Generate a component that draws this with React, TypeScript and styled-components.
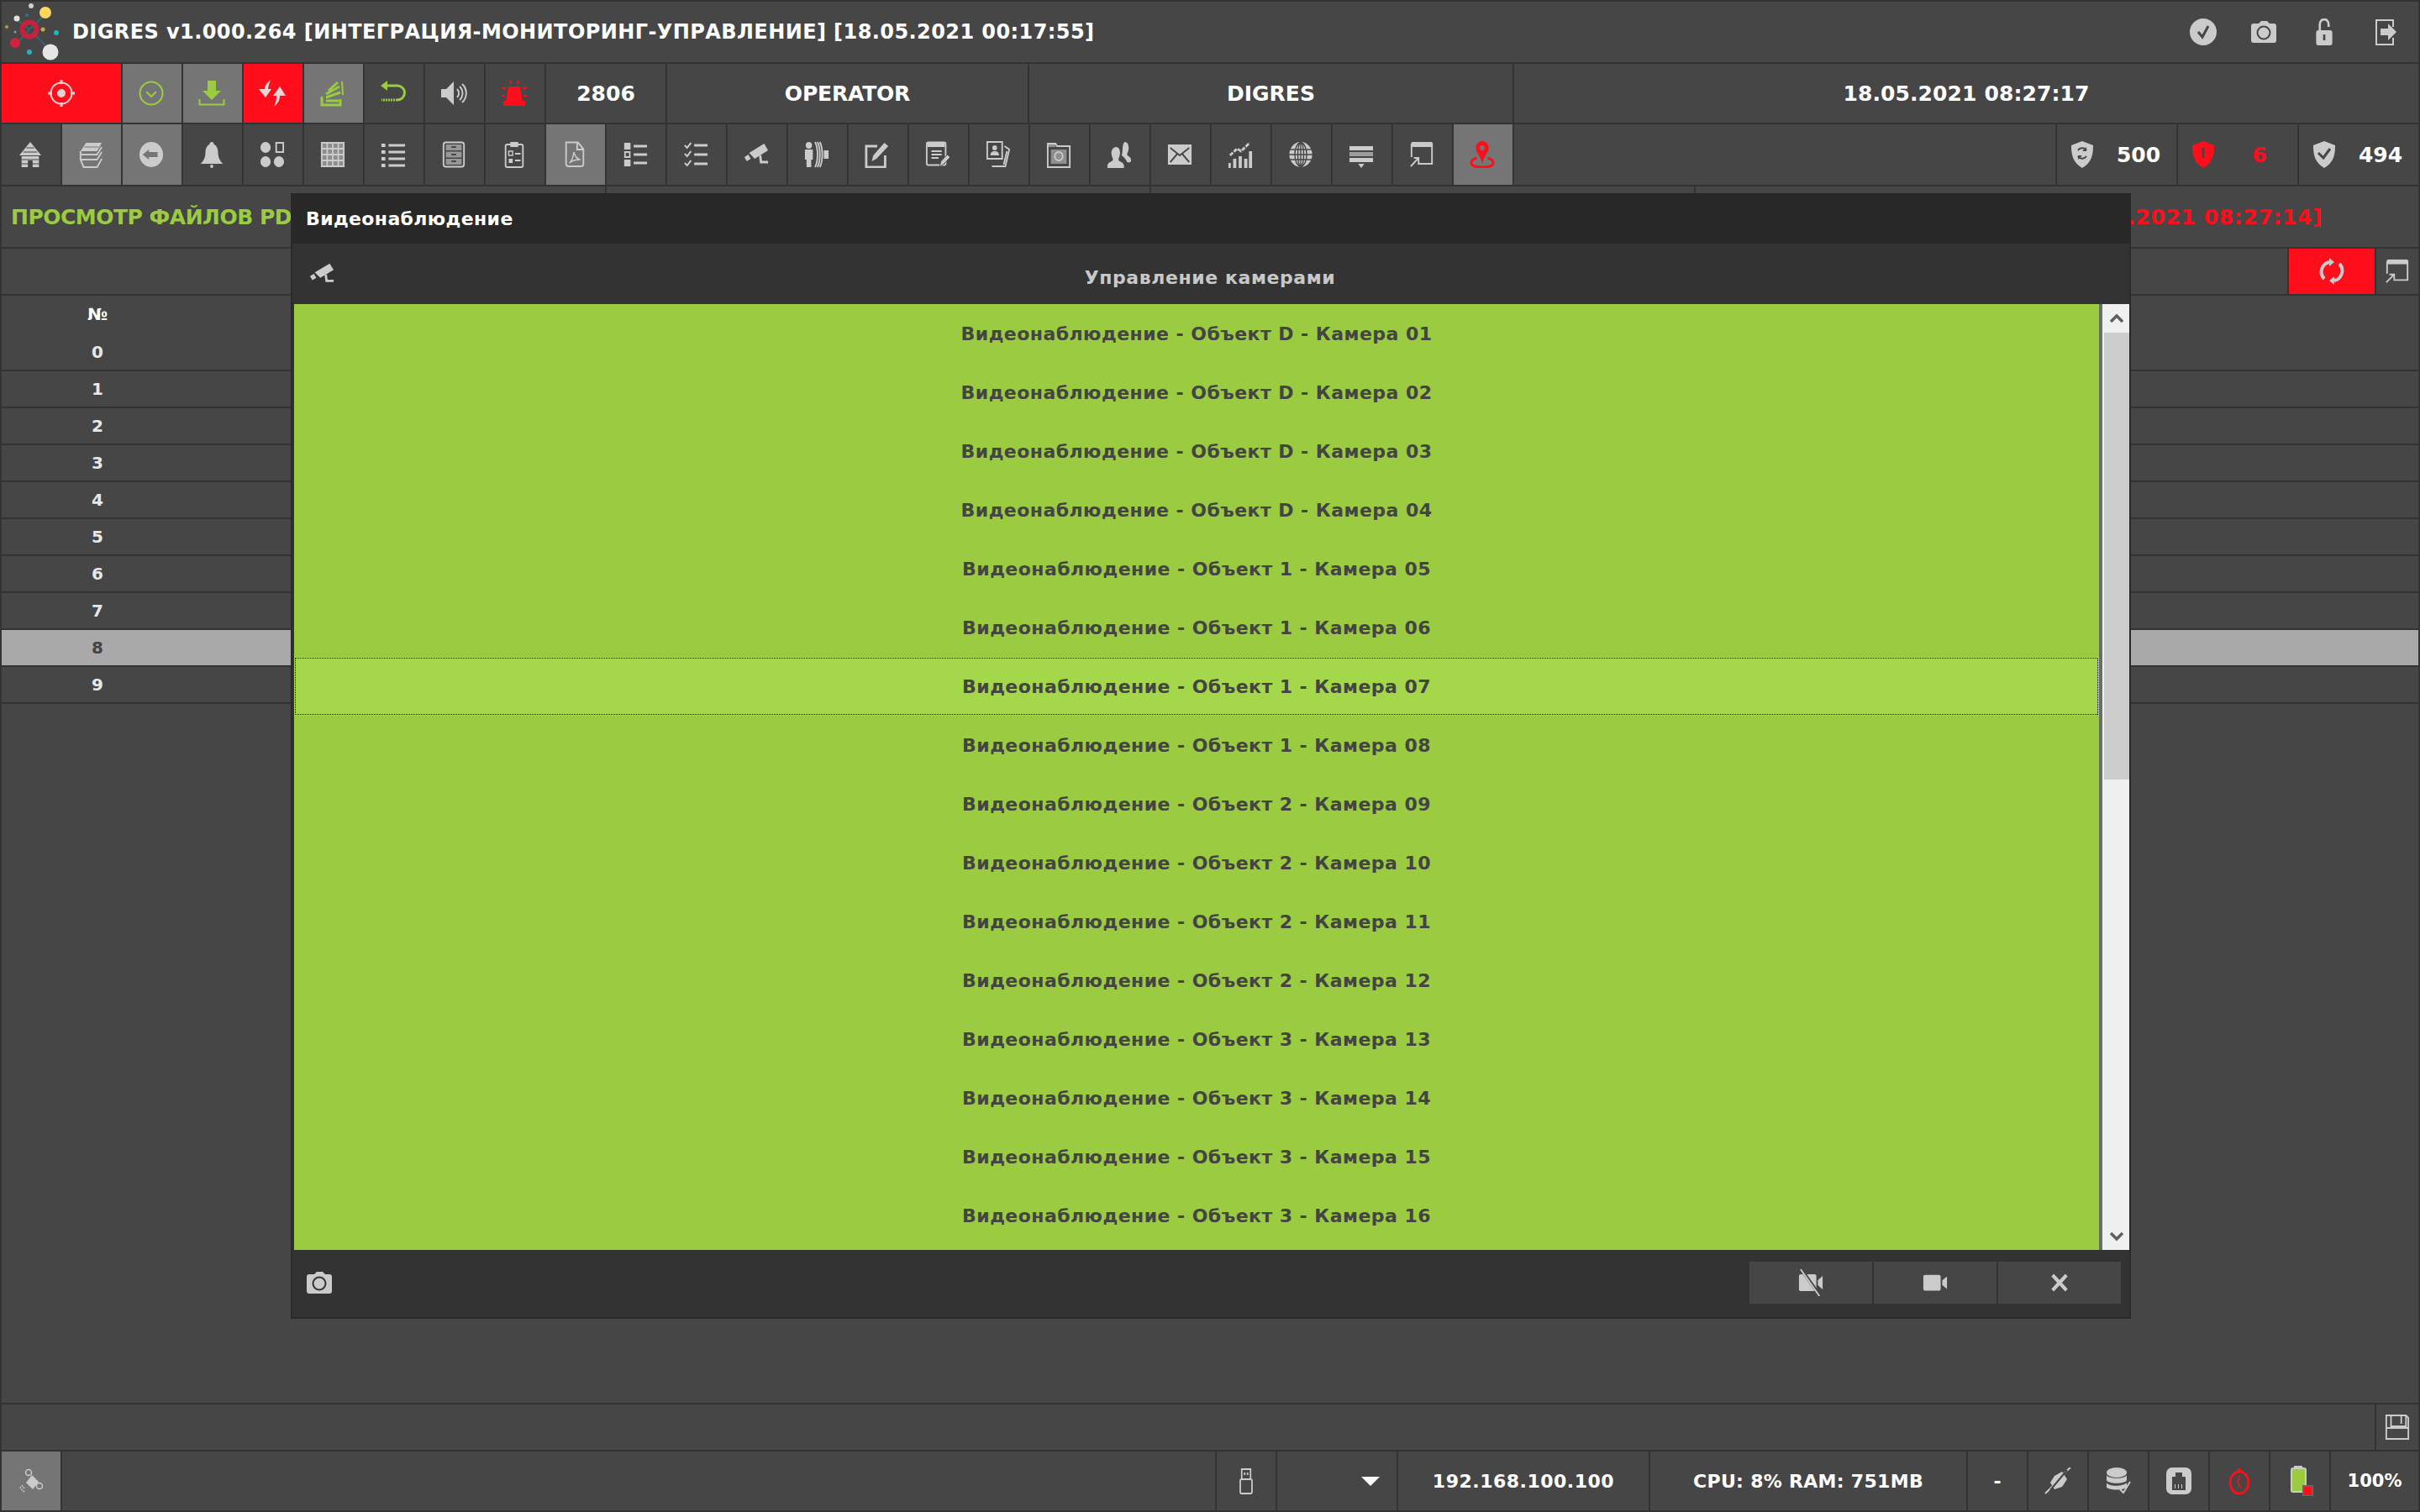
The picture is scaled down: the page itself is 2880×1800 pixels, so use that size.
import { ReactNode } from 'react';
import styled, { createGlobalStyle } from 'styled-components';

const PANEL = '#464646';
const LINE = '#333333';
const ACTIVE = '#757575';
const ICON = '#cbcbcb';
const GREEN = '#9acb40';
const RED = '#ff0d1b';

const GlobalStyle = createGlobalStyle`
  html, body {
    margin: 0;
    padding: 0;
    background: ${LINE};
  }
  * {
    box-sizing: border-box;
  }
`;

const Page = styled.div`
  position: relative;
  width: 2880px;
  height: 1800px;
  padding: 2px;
  background: ${LINE};
  display: flex;
  flex-direction: column;
  gap: 2px;
  overflow: hidden;
  font-family: 'DejaVu Sans', Verdana, sans-serif;
  font-weight: 700;
  color: #fff;
`;

const Row = styled.div<{ $h: number }>`
  height: ${(p) => p.$h}px;
  flex: none;
  display: flex;
  gap: 2px;
`;

const Cell = styled.div<{ $w?: number; $bg?: string; $color?: string; $size?: number; $track?: number }>`
  width: ${(p) => (p.$w ? `${p.$w}px` : 'auto')};
  flex: ${(p) => (p.$w ? 'none' : '1 1 0')};
  min-width: 0;
  background: ${(p) => p.$bg ?? PANEL};
  color: ${(p) => p.$color ?? '#fff'};
  font-size: ${(p) => p.$size ?? 25}px;
  letter-spacing: ${(p) => p.$track ?? 0}px;
  display: flex;
  align-items: center;
  justify-content: center;
  white-space: nowrap;
`;

const ToolCell = styled(Cell)`
  padding-right: 2px;
`;

const TitleBar = styled.div`
  flex: 1;
  background: ${PANEL};
  display: flex;
  align-items: center;
`;

const TitleText = styled.div`
  flex: 1;
  margin-left: 8px;
  font-size: 24px;
  letter-spacing: 0.42px;
`;

const TitleAction = styled.div<{ $w?: number }>`
  width: ${(p) => p.$w ?? 72}px;
  display: flex;
  justify-content: center;
`;

const Filler = styled.div`
  flex: 1;
  background: ${PANEL};
`;

const HeadCell = styled.div<{ $w?: number; $end?: boolean; $color: string; $track?: number }>`
  width: ${(p) => (p.$w ? `${p.$w}px` : 'auto')};
  flex: ${(p) => (p.$w ? 'none' : '1 1 0')};
  background: ${PANEL};
  color: ${(p) => p.$color};
  font-size: 25px;
  letter-spacing: ${(p) => p.$track ?? 0}px;
  display: flex;
  align-items: center;
  white-space: nowrap;
  overflow: hidden;
  justify-content: ${(p) => (p.$end ? 'flex-end' : 'flex-start')};
  padding: ${(p) => (p.$end ? '0 114px 0 0' : '0 0 0 11px')};
`;

const Counter = styled.div`
  width: 142px;
  flex: none;
  background: ${PANEL};
  padding-left: 16px;
  display: flex;
  align-items: center;
`;

const CounterValue = styled.span<{ $color?: string }>`
  flex: 1;
  padding-left: 8px;
  text-align: center;
  font-size: 25px;
  color: ${(p) => p.$color ?? '#fff'};
`;

const Table = styled.div`
  flex: 1;
  display: flex;
  flex-direction: column;
  gap: 2px;
`;

const TableRow = styled.div<{ $selected?: boolean }>`
  height: 42px;
  flex: none;
  background: ${(p) => (p.$selected ? '#a9a9a9' : PANEL)};
  color: ${(p) => (p.$selected ? '#444' : '#e8e8e8')};
  font-size: 20px;
  display: flex;
  align-items: center;
`;

/* the header row runs into row 0 with no rule between them */
const TableHead = styled(TableRow)`
  height: 46px;
  margin-bottom: -2px;
  padding-bottom: 2px;
  color: #fff;
`;

const NumberCol = styled.div`
  width: 228px;
  text-align: center;
`;

const Modal = styled.div`
  position: absolute;
  left: 346px;
  top: 230px;
  width: 2190px;
  height: 1340px;
  background: #333;
  border: 2px solid #2a2a2a;
  border-top: 0;
  display: flex;
  flex-direction: column;
`;

const ModalTitle = styled.div`
  height: 60px;
  flex: none;
  margin: 0 -2px;
  padding-left: 18px;
  background: #282828;
  font-size: 22px;
  letter-spacing: 0.37px;
  display: flex;
  align-items: center;
`;

const ModalHead = styled.div`
  position: relative;
  height: 72px;
  flex: none;
  padding: 8px 2px 0 0;
  color: #c8c8c8;
  font-size: 22px;
  letter-spacing: 0.58px;
  display: flex;
  align-items: center;
  justify-content: center;
`;

const HeadIcon = styled.div`
  position: absolute;
  left: 20px;
  top: 21px;
  display: flex;
`;

const ModalBody = styled.div`
  flex: 1;
  min-height: 0;
  padding-left: 2px;
  display: flex;
`;

const CameraList = styled.div`
  flex: 1;
  background: ${GREEN};
  display: flex;
  flex-direction: column;
`;

const CameraRow = styled.div<{ $focused?: boolean }>`
  position: relative;
  height: 70px;
  flex: none;
  color: #444;
  font-size: 22px;
  letter-spacing: 0.45px;
  display: flex;
  align-items: center;
  justify-content: center;
  ${(p) =>
    p.$focused &&
    `
    background: #a4d74a;
    &::after {
      content: '';
      position: absolute;
      inset: 1px;
      background-image:
        repeating-linear-gradient(90deg, #000 0 1px, transparent 1px 2px),
        repeating-linear-gradient(90deg, #000 0 1px, transparent 1px 2px),
        repeating-linear-gradient(0deg, #000 0 1px, transparent 1px 2px),
        repeating-linear-gradient(0deg, #000 0 1px, transparent 1px 2px);
      background-size: 100% 1px, 100% 1px, 1px 100%, 1px 100%;
      background-position: top, bottom, left, right;
      background-repeat: no-repeat;
    }
  `}
`;

const Gutter = styled.div`
  width: 4px;
  background: #667060;
`;

const Scrollbar = styled.div`
  width: 32px;
  padding-left: 2px;
  background: #f0f0f0;
  display: flex;
  flex-direction: column;
`;

const ScrollButton = styled.div`
  height: 34px;
  flex: none;
  display: flex;
  align-items: center;
  justify-content: center;
`;

const ScrollThumb = styled.div`
  height: 532px;
  flex: none;
  background: #cdcdcd;
`;

const ScrollTrack = styled.div`
  flex: 1;
`;

const ModalFooter = styled.div`
  height: 80px;
  flex: none;
  padding: 14px 10px 16px 16px;
  display: flex;
  align-items: center;
  gap: 2px;
`;

const FooterSpacer = styled.div`
  flex: 1;
  display: flex;
`;

const FooterButton = styled.div`
  width: 146px;
  height: 50px;
  background: #464646;
  display: flex;
  align-items: center;
  justify-content: center;
`;

const DropCell = styled(Cell)`
  justify-content: flex-end;
  padding-right: 20px;
`;

const DropArrow = styled.div`
  width: 0;
  height: 0;
  border-left: 11px solid transparent;
  border-right: 11px solid transparent;
  border-top: 11px solid #fff;
`;

const Glyph = styled.svg<{ $color?: string }>`
  display: block;
  flex: none;
  color: ${(p) => p.$color ?? ICON};
  fill: currentColor;
`;

const line = { fill: 'none', stroke: 'currentColor', strokeWidth: 2 };
const thick = { fill: 'none', stroke: 'currentColor', strokeWidth: 3 };

const glyphs: Record<string, (bg: string) => ReactNode> = {
  target: () => (
    <>
      <circle cx="16" cy="16" r="12.5" {...line} />
      <circle cx="16" cy="16" r="5" />
      <path d="M14.5 0h3v5h-3zM14.5 27h3v5h-3zM0 14.5h5v3H0zM27 14.5h5v3h-5z" />
    </>
  ),
  circleDown: () => (
    <>
      <circle cx="16" cy="16" r="13.5" {...line} />
      <path d="M10 14l6 6 6-6" {...line} />
    </>
  ),
  download: () => (
    <>
      <path d="M11 1h10v12h6L16 24 5 13h6z" />
      <path d="M1.500 23v6.500h29V23" {...line} />
    </>
  ),
  swap: () => (
    <>
      <path d="M14 0c-3 3-7 6-7 11H0l8 10 7-10H11c0-4 2-7 3-11z" />
      <path d="M18 32c3-3 7-6 7-13h7l-7-11-8 11h4c0 5-1 9-3 13z" />
    </>
  ),
  stack: () => (
    <>
      <path d="M3 20v10h22v-7" {...thick} />
      <path d="M8 25h15M8 21l17-6M8 17L24 8M11 13L22 3" {...thick} />
      <path d="M27 2l1 16" {...line} />
    </>
  ),
  undo: () => (
    <>
      <path d="M8 7h13a8.500 8.500 0 0 1 0 17" {...thick} />
      <path d="M9 1L1 7l8 6z" />
      <path d="M21 24H2" {...thick} strokeDasharray="2 1" />
    </>
  ),
  sound: () => (
    <>
      <path d="M1 11h6l9-9v28l-9-9H1z" />
      <path d="M20 11a7 7 0 0 1 0 10M23 8a11 11 0 0 1 0 16M26 5a15 15 0 0 1 0 22" {...line} />
    </>
  ),
  siren: () => (
    <>
      <path d="M9 8h14l3 17H6z" />
      <path d="M3 25h26v6H3z" />
      <path d="M11 1l1 4M21 1l-1 4M1 9l5 2M31 9l-5 2M1 19h4M27 19h4" {...line} />
    </>
  ),
  home: (bg) => (
    <>
      <path d="M16 1l14 16H2z" />
      <path d="M5 18h22v13H5z" />
      <path d="M11 8h10M7 13h18M5 22h22M5 27h22" stroke={bg} strokeWidth="1.200" fill="none" />
      <path d="M13 23h6v8h-6z" fill={bg} />
    </>
  ),
  layers: (bg) => (
    <>
      <path d="M10 2h20l-6 10H3z" />
      <path d="M3 12v4h21l6-9" {...line} />
      <path d="M3 17v5h21l6-9" {...line} />
      <path d="M3 22l4 9h17l6-10" {...line} />
      <path d="M8 7h18" stroke={bg} strokeWidth="1" fill="none" />
    </>
  ),
  back: (bg) => (
    <>
      <circle cx="16" cy="16" r="15" />
      <path d="M5 16l8-6v3h11v6H13v3z" fill={bg} />
    </>
  ),
  bell: () => (
    <>
      <path d="M16 1c2 0 3 2 3 3 4 2 5 6 5 10 0 5 2 9 6 13H2c4-4 6-8 6-13 0-4 1-8 5-10 0-1 1-3 3-3z" />
      <circle cx="16" cy="30" r="2" />
    </>
  ),
  shapes: () => (
    <>
      <circle cx="7.500" cy="7.500" r="6.500" />
      <path d="M21 2h9v11h-9z" {...line} />
      <circle cx="7.500" cy="24.500" r="6.500" />
      <circle cx="24.500" cy="24.500" r="6.500" />
    </>
  ),
  grid: () => (
    <>
      <path d="M2 2h28v28H2z" opacity=".55" />
      <path d="M2 1v30M9 1v30M16 1v30M23 1v30M30 1v30M1 2h30M1 9h30M1 16h30M1 23h30M1 30h30" {...line} />
    </>
  ),
  list: () => (
    <>
      <path d="M1 3h5v4H1zM1 11h5v4H1zM1 19h5v4H1zM1 27h5v4H1z" />
      <path d="M10 5h21M10 13h21M10 21h21M10 29h21" {...thick} />
    </>
  ),
  cabinet: (bg) => (
    <>
      <rect x="3" y="1.500" width="26" height="29" rx="3" {...line} />
      <path d="M6 4h20v7H6zM6 12.500h20v7H6zM6 21h20v7H6z" opacity=".6" />
      <path d="M13 7h6M13 16h6M13 24h6" {...line} stroke={bg} />
    </>
  ),
  clipboard: () => (
    <>
      <rect x="5" y="4" width="22" height="27" rx="2" {...line} />
      <path d="M11 1h10v6H11z" />
      <path d="M9 12h5v5H9z" {...line} strokeWidth="1.500" />
      <path d="M9 21h5v5H9zM17 14h7v2h-7zM17 22h7v2h-7z" />
    </>
  ),
  pdf: () => (
    <>
      <path d="M5 1.500h15l7 8V27a3 3 0 0 1-3 3H8a3 3 0 0 1-3-3z" {...line} />
      <path d="M19 2v8h8" {...line} />
      <path d="M9 26c3-2 5-7 6-13 1 5 3 8 8 9-5 0-10 1-14 4z" {...line} strokeWidth="1.500" />
    </>
  ),
  squares: () => (
    <>
      <path d="M2 2h8v8H2zM2 22h8v8H2z" />
      <path d="M3 13h6v6H3z" {...line} />
      <path d="M14 6h17M14 16h17M14 26h17" {...thick} />
    </>
  ),
  checks: () => (
    <>
      <path d="M2 5l3 3 5-6M2 15l3 3 5-6M2 26l3 3 5-6" {...line} />
      <path d="M14 5h17M14 16h17M14 27h17" {...thick} />
    </>
  ),
  cctv: () => (
    <>
      <path d="M7 14L26 3l5 8-17 10z" />
      <path d="M1 19l5-3 3 5-5 3z" />
      <path d="M21 17l1 8h9" {...thick} />
    </>
  ),
  broadcast: () => (
    <>
      <circle cx="6" cy="5" r="4" />
      <path d="M1 10h10v12H9v9H3v-9H1z" />
      <path d="M14 1c4 8 4 22 0 30M17 1c4 8 4 22 0 30M20 1c4 8 4 22 0 30" {...line} />
      <path d="M25 11h6v10h-6z" />
    </>
  ),
  edit: () => (
    <>
      <path d="M16 6H2v25h24V17" {...thick} />
      <path d="M9 24l2-7L25 2l5 4-15 15z" />
    </>
  ),
  note: (bg) => (
    <>
      <rect x="2" y="1.500" width="24" height="27" rx="2" {...line} />
      <path d="M3 2h22v5H3z" />
      <path d="M8 12h13M8 16h13M8 20h9" {...line} />
      <path d="M18 31l2-7 8-8 4 3-8 8z" stroke={bg} />
    </>
  ),
  photos: () => (
    <>
      <path d="M2 1h19v20H2z" {...line} />
      <circle cx="11.500" cy="8" r="3" />
      <path d="M6 17c0-4 3-5 5.500-5s5.500 1 5.500 5z" />
      <path d="M24 6l6 4-5 20H8M27 12l-4 16" {...line} />
    </>
  ),
  folderCam: () => (
    <>
      <path d="M2 5V3h10l2 3h16v25H2z" {...line} />
      <path d="M2 3h10v4H2zM6 10h20v17H6z" opacity=".55" />
      <circle cx="16" cy="18" r="5" {...line} />
    </>
  ),
  users: () => (
    <>
      <path d="M23 1c4 0 5 4 5 7 0 4-2 6-2 8s5 2 5 7c0 2-2 3-5 2-2-4-4-6-7-8 2-3 0-14 4-16z" />
      <path d="M12 7c4 0 5 4 5 7 0 4-2 6-2 8 0 3 7 2 7 8v2H1v-2c0-6 7-5 7-8 0-2-2-4-2-8 0-3 2-7 6-7z" />
    </>
  ),
  mail: (bg) => (
    <>
      <path d="M1 4h30v24H1z" />
      <path d="M4 8l12 9 12-9M4 25l9-10M28 25l-9-10" {...line} stroke={bg} />
    </>
  ),
  chart: () => (
    <>
      <path d="M1 26h3v6H1zM7 21h4v11H7zM14 18h4v14h-4zM21 21h4v11h-4zM27 12h4v20h-4z" />
      <path d="M3 17l9-8 5 3L28 2" {...thick} strokeDasharray="5 1.500" />
    </>
  ),
  globe: () => (
    <>
      <ellipse cx="16" cy="16" rx="14.500" ry="15" />
      <path
        d="M1 10h30M1 16h30M1 22h30M16 1v30M16 1c-5 5-5 25 0 30M16 1c5 5 5 25 0 30M16 1c-10 5-10 25 0 30M16 1c10 5 10 25 0 30"
        fill="none"
        stroke="#464646"
        strokeWidth="1.500"
      />
    </>
  ),
  bars: () => (
    <>
      <path d="M1 6h30v5H1z" />
      <path d="M1 13h30v5H1z" opacity=".65" />
      <path d="M1 20h30v5H1z" />
      <path d="M12 27h8l-4 5z" />
    </>
  ),
  cast: () => (
    <>
      <path d="M3 3h26v24H11" {...line} />
      <path d="M3 1h26v6H3z" />
      <path d="M3 3v16" {...line} />
      <path d="M2 30l9-9M6 20h6v6" {...line} />
    </>
  ),
  pin: () => (
    <>
      <path
        fillRule="evenodd"
        d="M16 0c5 0 8 4 8 8 0 6-6 9-8 19-2-10-8-13-8-19 0-4 3-8 8-8zm0 5a3 3 0 1 0 0 6 3 3 0 0 0 0-6z"
      />
      <path d="M9 20c-5 1-7 4-7 6 0 3 5 5 14 5s14-2 14-5c0-2-2-5-7-6" {...thick} />
    </>
  ),
  shieldSync: (bg) => (
    <>
      <path d="M14 0l13 5c0 10-1 20-13 27C2 25 1 15 1 5z" />
      <path d="M9 11a6 6 0 0 1 10 0M19 18a6 6 0 0 1-10 0" {...line} stroke={bg} />
      <path d="M19 7v5h-5M9 22v-5h5" fill={bg} />
    </>
  ),
  shieldAlert: (bg) => (
    <>
      <path d="M14 0l13 5c0 10-1 20-13 27C2 25 1 15 1 5z" />
      <path d="M12.500 8h3v12h-3z" fill={bg} />
    </>
  ),
  shieldCheck: (bg) => (
    <>
      <path d="M14 0l13 5c0 10-1 20-13 27C2 25 1 15 1 5z" />
      <path d="M7 14l6 6 8-11" {...thick} stroke={bg} />
    </>
  ),
  checkCircle: (bg) => (
    <>
      <circle cx="16" cy="16" r="16" />
      <path d="M10 16l5 6 7-13" {...thick} stroke={bg} />
    </>
  ),
  camera: (bg) => (
    <>
      <path d="M1 9a3 3 0 0 1 3-3h6l3-3h7l3 3h5a3 3 0 0 1 3 3v17a3 3 0 0 1-3 3H4a3 3 0 0 1-3-3z" />
      <circle cx="16" cy="17" r="7.500" {...line} stroke={bg} />
    </>
  ),
  unlock: (bg) => (
    <>
      <path d="M10 16V7a6 6 0 0 1 12 0v3" {...thick} />
      <rect x="5" y="14" width="22" height="18" rx="3" />
      <path d="M14.500 19h3v7h-3z" fill={bg} />
    </>
  ),
  exit: () => (
    <>
      <path d="M24 10V2H4v29h20v-8" {...line} />
      <path d="M9 12h9V6l10 10-10 10v-6H9z" />
    </>
  ),
  refresh: () => (
    <>
      <path d="M7 25A12 12 0 0 1 13 5M25 7a12 12 0 0 1-6 20" {...thick} strokeWidth="4" />
      <path d="M13 0l6 5-6 5zM19 22l-6 5 6 5z" />
    </>
  ),
  save: () => (
    <>
      <path d="M2 2h25l3 3v25H2z" {...line} />
      <path d="M2 17h28M21 2v10M8 2v13h19V2" {...line} />
    </>
  ),
  satellite: () => (
    <>
      <path d="M17 9l8 8-7 9-8-8z" />
      <circle cx="13" cy="6" r="3.500" {...line} strokeWidth="1.500" />
      <circle cx="26" cy="22" r="3.500" {...line} strokeWidth="1.500" />
      <path d="M3 23c1 3 3 5 6 6M5 21c1 2 2 3 4 4" {...line} strokeWidth="1.500" strokeDasharray="2 1" />
    </>
  ),
  usb: () => (
    <>
      <rect x="8" y="14" width="16" height="17" rx="2" {...line} />
      <path d="M10 2h12v12H10z" {...line} />
      <path d="M13 6h2v3h-2zM17 6h2v3h-2z" />
    </>
  ),
  plugOff: (bg) => (
    <>
      <path d="M12 10l9-5 6 9-6 9-9 3-5-8z" />
      <path d="M1 31l9-9M22 8l9-8" {...line} />
      <path d="M7 27L27 3" {...line} stroke={bg} />
    </>
  ),
  dbCheck: () => (
    <>
      <ellipse cx="14" cy="6" rx="12" ry="6" />
      <path d="M2 9c2 5 22 5 24 0v6c-2 5-22 5-24 0z" />
      <path d="M2 18c2 5 20 5 24 0v5c-2 4-16 5-24 1z" />
      <path d="M18 26l4 4 8-13" {...line} />
    </>
  ),
  ethernet: (bg) => (
    <>
      <rect x="1" y="0" width="30" height="32" rx="7" />
      <path d="M12 6h8v5h4v16H8V11h4z" fill={bg} />
      <path d="M11 20h1v5h-1zM15 20h1v5h-1zM19 20h1v5h-1z" />
    </>
  ),
  timer: () => (
    <>
      <ellipse cx="16" cy="18" rx="12.500" ry="13" {...thick} />
      <path d="M14 1h4v5h-4z" />
      <path d="M16 10l-2 8 4 6" {...line} />
    </>
  ),
  videoOff: (bg) => (
    <>
      <path d="M1 8a2 2 0 0 1 2-2h18a2 2 0 0 1 2 2v16a2 2 0 0 1-2 2H3a2 2 0 0 1-2-2zM25 13l6-5v16l-6-5z" />
      <path d="M4 0l24 32" {...line} stroke={bg} strokeWidth="4" />
      <path d="M3 0l24 32" {...line} />
    </>
  ),
  video: () => <path d="M1 8a2 2 0 0 1 2-2h18a2 2 0 0 1 2 2v16a2 2 0 0 1-2 2H3a2 2 0 0 1-2-2zM25 13l6-5v16l-6-5z" />,
  close: () => <path d="M4 4l24 24M28 4L4 28" {...line} strokeWidth="6" />,
  chevronUp: () => <path d="M1 10l7-7 7 7" {...line} stroke="#606060" strokeWidth="3.500" />,
  chevronDown: () => <path d="M1 3l7 7 7-7" {...line} stroke="#606060" strokeWidth="3.500" />,
};

function Icon({
  name,
  color,
  bg = PANEL,
  w = 32,
  h = 32,
  box = '0 0 32 32',
}: {
  name: string;
  color?: string;
  bg?: string;
  w?: number;
  h?: number;
  box?: string;
}) {
  return (
    <Glyph viewBox={box} width={w} height={h} preserveAspectRatio="none" $color={color}>
      {glyphs[name](bg)}
    </Glyph>
  );
}

function Logo() {
  return (
    <svg viewBox="0 0 76 72" width={76} height={72} style={{ flex: 'none' }}>
      <path d="M33 33L52 15M36 36L60 60M33 33L18 50M33 33L19 22" stroke="#2c6a70" strokeWidth="2" />
      <circle cx="33" cy="33" r="8.500" fill="none" stroke="#c8203f" strokeWidth="6" />
      <circle cx="52" cy="13" r="7" fill="#ffd75f" />
      <circle cx="35" cy="5" r="3" fill="#d0d0d0" />
      <circle cx="18" cy="20" r="3.500" fill="#e0e0e0" />
      <circle cx="6" cy="30" r="2" fill="#b09a50" />
      <circle cx="49" cy="33" r="2.500" fill="#c8aa40" />
      <circle cx="65" cy="37" r="3" fill="#20b5c0" />
      <circle cx="33" cy="60" r="3" fill="#20b5c0" />
      <circle cx="30" cy="16" r="2" fill="#27777f" />
      <circle cx="16" cy="36" r="1.500" fill="#999" />
      <circle cx="58" cy="60" r="9.500" fill="#e6e6e6" />
      <circle cx="16" cy="49" r="6" fill="#d3213f" />
    </svg>
  );
}

const controls = [
  { name: 'circleDown', bg: ACTIVE, color: GREEN },
  { name: 'download', bg: ACTIVE, color: GREEN },
  { name: 'swap', bg: RED, color: '#e8d8d8' },
  { name: 'stack', bg: ACTIVE, color: GREEN },
  { name: 'undo', bg: PANEL, color: GREEN },
  { name: 'sound', bg: PANEL, color: ICON },
  { name: 'siren', bg: PANEL, color: RED },
];

const tools = [
  'home', 'layers', 'back', 'bell', 'shapes', 'grid', 'list', 'cabinet', 'clipboard', 'pdf',
  'squares', 'checks', 'cctv', 'broadcast', 'edit', 'note', 'photos', 'folderCam', 'users',
  'mail', 'chart', 'globe', 'bars', 'cast', 'pin',
];
const activeTools = ['layers', 'back', 'pdf', 'pin'];

const cameras = [
  ['D', '01'], ['D', '02'], ['D', '03'], ['D', '04'],
  ['1', '05'], ['1', '06'], ['1', '07'], ['1', '08'],
  ['2', '09'], ['2', '10'], ['2', '11'], ['2', '12'],
  ['3', '13'], ['3', '14'], ['3', '15'], ['3', '16'],
];

const rowNumbers = [0, 1, 2, 3, 4, 5, 6, 7, 8, 9];

export default function App() {
  return (
    <>
      <GlobalStyle />
      <Page>
        <Row $h={72}>
          <TitleBar>
            <Logo />
            <TitleText>DIGRES v1.000.264 [ИНТЕГРАЦИЯ-МОНИТОРИНГ-УПРАВЛЕНИЕ] [18.05.2021 00:17:55]</TitleText>
            <TitleAction><Icon name="checkCircle" /></TitleAction>
            <TitleAction><Icon name="camera" /></TitleAction>
            <TitleAction><Icon name="unlock" w={28} /></TitleAction>
            <TitleAction $w={76}><Icon name="exit" /></TitleAction>
          </TitleBar>
        </Row>

        <Row $h={70}>
          <Cell $w={142} $bg={RED}><Icon name="target" color="#e6d2d2" bg={RED} /></Cell>
          {controls.map((c) => (
            <ToolCell key={c.name} $w={70} $bg={c.bg}>
              <Icon name={c.name} color={c.color} bg={c.bg} />
            </ToolCell>
          ))}
          <Cell $w={142}>2806</Cell>
          <Cell $w={429} $track={-0.2}>OPERATOR</Cell>
          <Cell $w={575}>DIGRES</Cell>
          <Cell $track={0.1}>18.05.2021 08:27:17</Cell>
        </Row>

        <Row $h={72}>
          {tools.map((name) => {
            const active = activeTools.includes(name);
            const bg = active ? ACTIVE : PANEL;
            return (
              <ToolCell key={name} $w={70} $bg={bg}>
                <Icon name={name} w={30} bg={bg} color={name === 'pin' ? RED : undefined} />
              </ToolCell>
            );
          })}
          <Filler />
          <Counter>
            <Icon name="shieldSync" w={28} box="0 0 28 32" />
            <CounterValue>500</CounterValue>
          </Counter>
          <Counter>
            <Icon name="shieldAlert" w={28} box="0 0 28 32" color={RED} />
            <CounterValue $color={RED}>6</CounterValue>
          </Counter>
          <Counter>
            <Icon name="shieldCheck" w={28} box="0 0 28 32" />
            <CounterValue>494</CounterValue>
          </Counter>
        </Row>

        <Row $h={72}>
          <HeadCell $w={718} $color={GREEN} $track={-0.5}>ПРОСМОТР ФАЙЛОВ PDF</HeadCell>
          <HeadCell $w={646} $color={GREEN} />
          <HeadCell $w={646} $color={GREEN} />
          <HeadCell $end $color={RED} $track={0.6}>[18.05.2021 08:27:14]</HeadCell>
        </Row>

        <Row $h={54}>
          <Filler />
          <Cell $w={102} $bg={RED}><Icon name="refresh" bg={RED} /></Cell>
          <Cell $w={50}><Icon name="cast" w={30} h={30} /></Cell>
        </Row>

        <Table>
          <TableHead><NumberCol>№</NumberCol></TableHead>
          {rowNumbers.map((n) => (
            <TableRow key={n} $selected={n === 8}>
              <NumberCol>{n}</NumberCol>
            </TableRow>
          ))}
          <Filler />
        </Table>

        <Row $h={54}>
          <Filler />
          <Cell $w={50}><Icon name="save" w={30} h={32} /></Cell>
        </Row>

        <Row $h={70}>
          <Cell $w={70} $bg={ACTIVE}><Icon name="satellite" bg={ACTIVE} /></Cell>
          <Filler />
          <Cell $w={70}><Icon name="usb" w={28} /></Cell>
          <DropCell $w={142}><DropArrow /></DropCell>
          <Cell $w={298} $size={22} $track={0.5}>192.168.100.100</Cell>
          <Cell $w={376} $size={22} $track={0.3}>CPU: 8% RAM: 751MB</Cell>
          <Cell $w={70} $size={22}>-</Cell>
          <Cell $w={70}><Icon name="plugOff" /></Cell>
          <Cell $w={70}><Icon name="dbCheck" /></Cell>
          <Cell $w={70}><Icon name="ethernet" /></Cell>
          <Cell $w={70}><Icon name="timer" w={28} color={RED} /></Cell>
          <Cell $w={70}>
            <svg viewBox="0 0 32 36" width={32} height={36}>
              <rect x="9" y="0" width="10" height="4" fill={ICON} />
              <rect x="6" y="3" width="17" height="28" rx="2" fill={GREEN} stroke={ICON} strokeWidth="2" />
              <rect x="19" y="23" width="13" height="13" fill="#666" />
              <rect x="21" y="25" width="9" height="10" fill={RED} />
            </svg>
          </Cell>
          <Cell $w={104} $size={21}>100%</Cell>
        </Row>

        <Modal>
          <ModalTitle>Видеонаблюдение</ModalTitle>
          <ModalHead>
            <HeadIcon><Icon name="cctv" w={30} h={30} /></HeadIcon>
            Управление камерами
          </ModalHead>
          <ModalBody>
            <CameraList>
              {cameras.map(([site, cam]) => (
                <CameraRow key={cam} $focused={cam === '07'}>
                  Видеонаблюдение - Объект {site} - Камера {cam}
                </CameraRow>
              ))}
            </CameraList>
            <Gutter />
            <Scrollbar>
              <ScrollButton><Icon name="chevronUp" w={16} h={13} box="0 0 16 13" /></ScrollButton>
              <ScrollThumb />
              <ScrollTrack />
              <ScrollButton><Icon name="chevronDown" w={16} h={13} box="0 0 16 13" /></ScrollButton>
            </Scrollbar>
          </ModalBody>
          <ModalFooter>
            <FooterSpacer><Icon name="camera" w={32} h={32} bg="#333" /></FooterSpacer>
            <FooterButton><Icon name="videoOff" w={30} h={32} /></FooterButton>
            <FooterButton><Icon name="video" w={30} h={30} /></FooterButton>
            <FooterButton><Icon name="close" w={22} h={24} /></FooterButton>
          </ModalFooter>
        </Modal>
      </Page>
    </>
  );
}
